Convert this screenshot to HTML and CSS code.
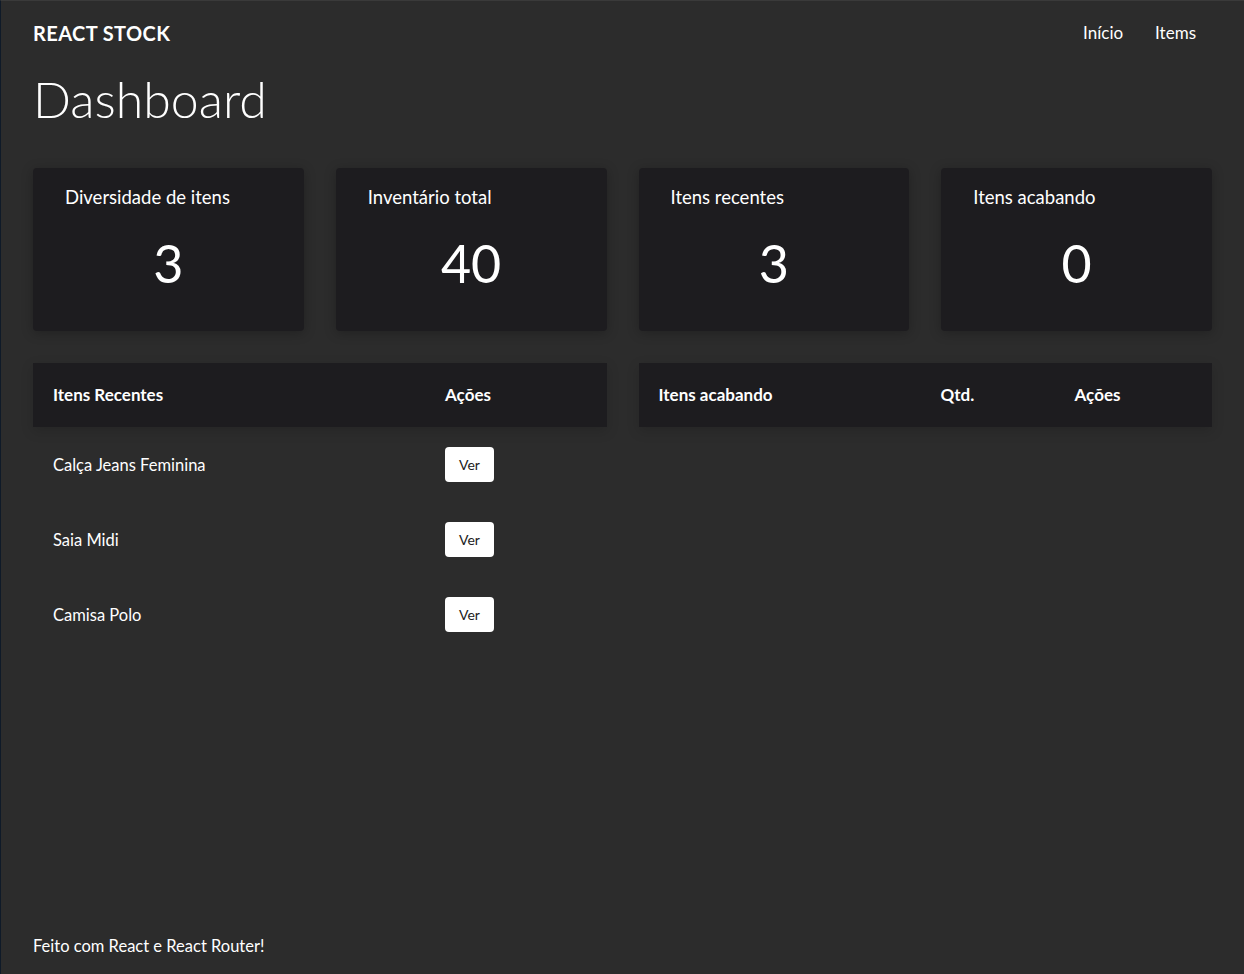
FILE: index.html
```html
<!DOCTYPE html>
<html lang="pt-BR">
<head>
<meta charset="utf-8">
<title>React Stock</title>
<link rel="stylesheet" href="styles.css">
</head>
<body>
<div class="app">
  <header class="topbar">
    <a class="brand" href="#">REACT STOCK</a>
    <nav class="nav">
      <a href="#">Início</a>
      <a href="#">Items</a>
    </nav>
  </header>
  <main class="main">
    <h1 class="page-title">Dashboard</h1>
    <section class="stats">
      <div class="stat-card"><div class="stat-label">Diversidade de itens</div><div class="stat-value">3</div></div>
      <div class="stat-card"><div class="stat-label">Inventário total</div><div class="stat-value">40</div></div>
      <div class="stat-card"><div class="stat-label">Itens recentes</div><div class="stat-value">3</div></div>
      <div class="stat-card"><div class="stat-label">Itens acabando</div><div class="stat-value">0</div></div>
    </section>
    <section class="tables">
      <div class="table table-recent">
        <div class="thead">
          <div class="th">Itens Recentes</div>
          <div class="th">Ações</div>
        </div>
        <div class="tr"><div class="td">Calça Jeans Feminina</div><div class="td"><button class="btn">Ver</button></div></div>
        <div class="tr"><div class="td">Saia Midi</div><div class="td"><button class="btn">Ver</button></div></div>
        <div class="tr"><div class="td">Camisa Polo</div><div class="td"><button class="btn">Ver</button></div></div>
      </div>
      <div class="table table-low">
        <div class="thead">
          <div class="th">Itens acabando</div>
          <div class="th">Qtd.</div>
          <div class="th">Ações</div>
        </div>
      </div>
    </section>
  </main>
  <footer class="footer">Feito com React e React Router!</footer>
</div>
</body>
</html>
```

FILE: styles.css
```css
* { box-sizing: border-box; }
html, body { margin: 0; padding: 0; }
body {
  background: #2c2c2c;
  color: #ffffff;
  font-family: "Lato", "Open Sans", sans-serif;
  border-left: 1px solid #0f1a28;
  border-top: 1px solid #3a3a3a;
}
.app {
  min-height: 973px;
  display: flex;
  flex-direction: column;
  padding: 0 32px 0 32px;
}
.topbar {
  height: 63px;
  display: flex;
  align-items: center;
  justify-content: space-between;
}
.brand {
  color: #fff;
  text-decoration: none;
  font-weight: 700;
  font-size: 20px;
  letter-spacing: 0.4px;
}
.nav {
  display: flex;
  gap: 32px;
  padding-right: 16px;
}
.nav a {
  color: #fff;
  text-decoration: none;
  font-size: 17px;
}
.main { flex: 1; }
.page-title {
  margin: 6px 0 40px;
  font-size: 50px;
  font-weight: 300;
  line-height: 58px;
}
.stats {
  display: grid;
  grid-template-columns: repeat(4, 1fr);
  gap: 32px;
}
.stat-card {
  background: #1d1c1f;
  border-radius: 4px;
  height: 163px;
  padding: 17px 32px 0;
  box-shadow: 0 2px 12px rgba(0,0,0,0.25);
}
.stat-label {
  font-size: 18.5px;
  line-height: 24px;
}
.stat-value {
  text-align: center;
  font-size: 52px;
  line-height: 60px;
  margin-top: 24px;
}
.tables {
  margin-top: 32px;
  display: grid;
  grid-template-columns: 1fr 1fr;
  gap: 32px;
  align-items: start;
}
.thead {
  background: #1d1c1f;
  height: 64px;
  display: grid;
  align-items: center;
  box-shadow: 0 4px 12px rgba(0,0,0,0.15);
}
.tr {
  display: grid;
  height: 75px;
  align-items: center;
}
.table-recent .thead, .table-recent .tr { grid-template-columns: 392px 1fr; }
.table-low .thead { grid-template-columns: 282px 134px 1fr; }
.th {
  padding-left: 20px;
  padding-bottom: 2px;
  font-weight: 700;
  font-size: 17px;
}
.td {
  padding-left: 20px;
  padding-bottom: 0;
  font-size: 16.5px;
}
.btn {
  background: #ffffff;
  color: #222;
  border: none;
  border-radius: 4px;
  width: 49px;
  height: 35px;
  font-family: inherit;
  font-size: 14px;
  cursor: pointer;
}
.footer {
  height: 56px;
  padding-top: 18px;
  font-size: 16.5px;
}
```
